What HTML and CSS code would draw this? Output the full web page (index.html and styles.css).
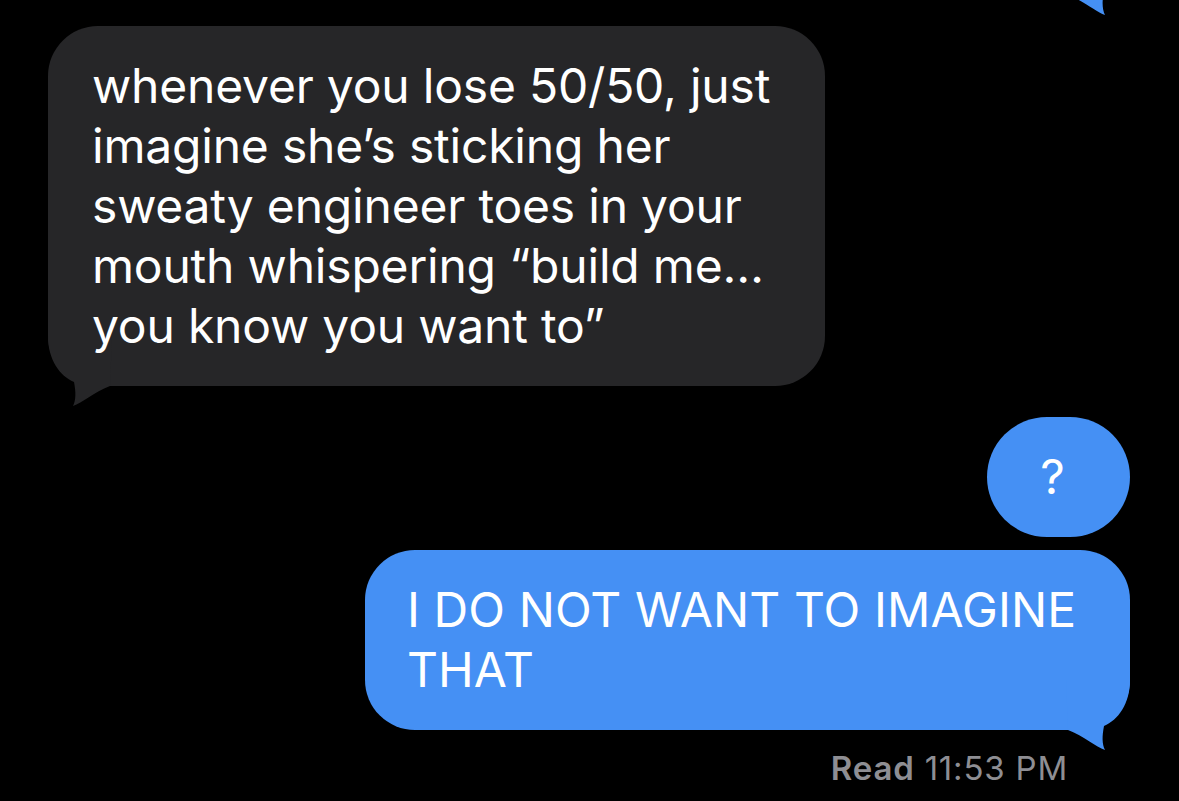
FILE: index.html
```html
<!doctype html>
<html lang="en">
<head>
    <meta charset="utf-8">
    <title>Messages</title>
    <meta name="viewport" content="width=1179">
    <link rel="stylesheet" href="styles.css">
</head>
<body>
<div class="thread">
    <!-- tail of the previous sent bubble, scrolled mostly out of view -->
    <svg class="tail tail-prev" viewBox="0 -50 64 71" width="64" height="71">
        <path d="M0,-50 C0,-26 12,-10 26,-4 C28,6 28,14 25,20 C34,17 46,6 62,0 L64,-50 Z"></path>
    </svg>

    <div class="bubble recv">
        whenever you lose 50/50, just<br>
        imagine she’s sticking her<br>
        sweaty engineer toes in your<br>
        mouth whispering “build me…<br>
        you know you want to”
        <svg class="tail" viewBox="0 -50 64 71" width="64" height="71">
            <path d="M0,-50 C0,-26 12,-10 26,-4 C28,6 28,14 25,20 C34,17 46,6 62,0 L64,-50 Z"></path>
        </svg>
    </div>

    <div class="bubble sent short">?</div>

    <div class="bubble sent last">
        I DO NOT WANT TO IMAGINE<br>
        THAT
        <svg class="tail" viewBox="0 -50 64 71" width="64" height="71">
            <path d="M0,-50 C0,-26 12,-10 26,-4 C28,6 28,14 25,20 C34,17 46,6 62,0 L64,-50 Z"></path>
        </svg>
    </div>

    <div class="receipt"><b>Read</b> 11:53 PM</div>
</div>
</body>
</html>
```

FILE: styles.css
```css
body {
    margin: 0;
    background-color: #000;
    font-family: Inter, "Noto Sans", sans-serif;
}

.thread {
    position: relative;
    width: 1179px;
    height: 801px;
    box-sizing: border-box;
    padding: 26px 49px 0 48px;
    display: flex;
    flex-direction: column;
    overflow: hidden;
}

.bubble {
    position: relative;
    z-index: 0;
    font-size: 48px;
    line-height: 60px;
    letter-spacing: -0.2px;
    white-space: nowrap;
    color: #fff;
    border-radius: 50px;
    padding: 30px 55px 30px 44px;
}

.recv {
    align-self: flex-start;
    background-color: #262628;
}

.recv .tail {
    fill: #262628;
}

.sent {
    align-self: flex-end;
    background-color: #4590f4;
}

.sent .tail {
    fill: #4590f4;
}

.tail {
    position: absolute;
    z-index: -1;
    left: 0;
    bottom: -21px;
}

.sent .tail {
    left: auto;
    right: 0;
    transform: scaleX(-1);
}

.tail-prev {
    left: auto;
    right: 49px;
    top: -55px;
    fill: #4590f4;
    transform: scaleX(-1);
}

.short {
    margin-top: 31px;
    width: 143px;
    box-sizing: border-box;
    padding: 30px 12px 30px 0;
    text-align: center;
    border-radius: 60px;
}

.last {
    margin-top: 13px;
    padding-left: 42px;
    padding-right: 0;
    width: 765px;
    box-sizing: border-box;
    letter-spacing: 0.1px;
}

.receipt {
    align-self: flex-end;
    margin-top: 18px;
    margin-right: 62px;
    font-size: 33px;
    line-height: 40px;
    letter-spacing: 0.8px;
    color: #8e8e93;
}

.receipt b {
    font-weight: 600;
}
```
